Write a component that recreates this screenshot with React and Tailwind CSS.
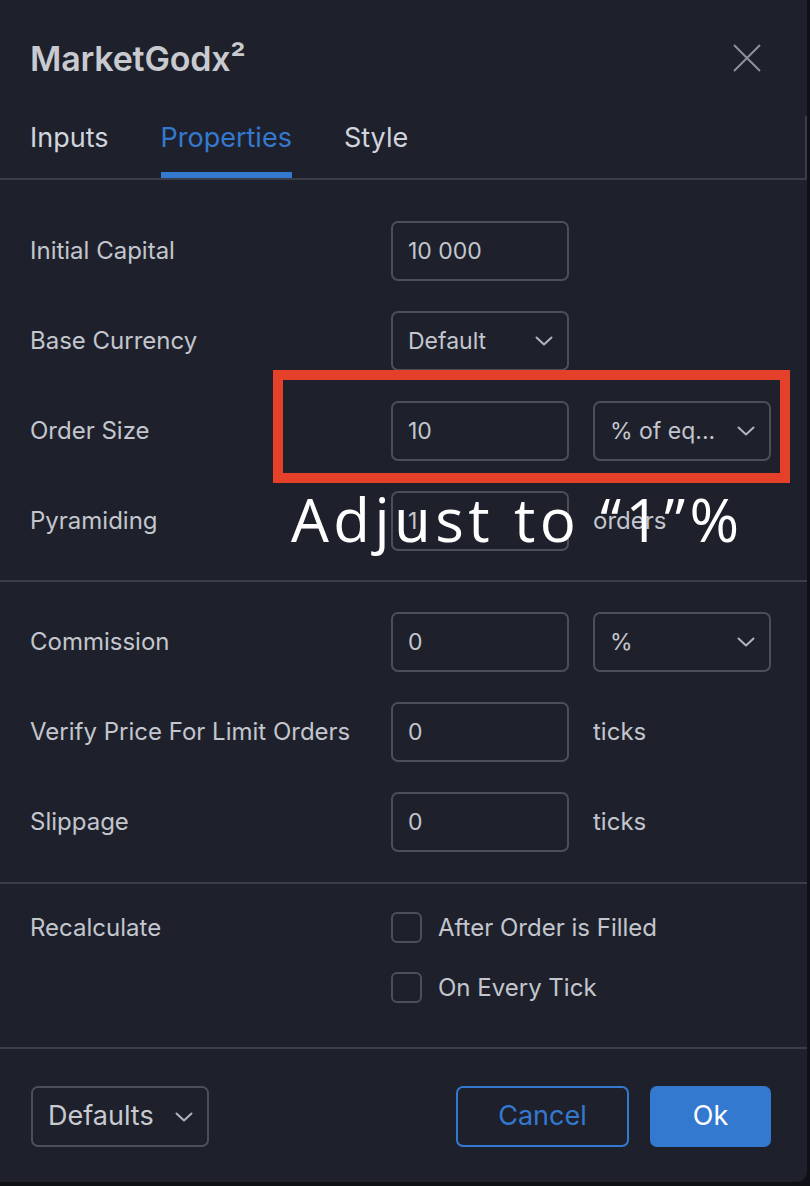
import React from "react";

const Chevron = ({ className = "" }) => (
  <svg className={className} width="18" height="10" viewBox="0 0 18 10" fill="none">
    <path d="M1.5 1.5 L9 8.5 L16.5 1.5" stroke="#b2b5be" strokeWidth="2" strokeLinecap="round" strokeLinejoin="round" />
  </svg>
);

const Label = ({ children }) => (
  <div className="w-[361px] shrink-0 text-[24px] text-[#c3c6cd]">{children}</div>
);

const Input = ({ value }) => (
  <div className="w-[178px] h-[60px] shrink-0 rounded-[7px] border-2 border-[#4c4f5a] flex items-center pl-[15px] text-[23px] text-[#c3c6cd]">
    {value}
  </div>
);

const Select = ({ value }) => (
  <div className="w-[178px] h-[60px] shrink-0 rounded-[7px] border-2 border-[#4c4f5a] flex items-center justify-between pl-[15px] pr-[14px] text-[23px] text-[#c3c6cd]">
    <span>{value}</span>
    <Chevron />
  </div>
);

const Row = ({ label, children }) => (
  <div className="flex items-center h-[60px]">
    <Label>{label}</Label>
    <div className="flex items-center gap-[24px]">{children}</div>
  </div>
);

const Suffix = ({ children }) => (
  <span className="text-[24px] text-[#c3c6cd]">{children}</span>
);

const Checkbox = ({ label }) => (
  <div className="flex items-center gap-[16px] h-[31px]">
    <div className="w-[31px] h-[31px] rounded-[6px] border-2 border-[#4c4f5a]" />
    <span className="text-[24px] leading-[31px] text-[#c3c6cd]">{label}</span>
  </div>
);

const Sep = () => <div className="h-[2px] w-full bg-[#3a3d47]" />;

export default function App() {
  return (
    <div className="w-[810px] h-[1186px] bg-[#0e1016] overflow-hidden" style={{ fontFamily: "Inter, 'Noto Sans', sans-serif" }}>
      <div className="relative w-[807px] h-[1182px] bg-[#1e212c] rounded-br-[10px] flex flex-col">
        {/* Header */}
        <div className="h-[116px] shrink-0 flex items-center justify-between pl-[30px] pr-[45px]">
          <div className="text-[34px] font-semibold text-[#c8cad0] tracking-[-0.2px]">
            MarketGodx²
          </div>
          <svg width="30" height="30" viewBox="0 0 30 30" fill="none">
            <path d="M2 2 L28 28 M28 2 L2 28" stroke="#8e9199" strokeWidth="2" />
          </svg>
        </div>
        {/* Tabs */}
        <div className="flex items-end pl-[30px] gap-[52px] h-[62px] shrink-0 border-r-2 border-[#3a3d47]">
          <div className="flex flex-col">
            <span className="text-[27px] text-[#d1d4dc] leading-[32px] pb-[24px]">Inputs</span>
          </div>
          <div className="flex flex-col">
            <span className="text-[27px] text-[#3479d0] leading-[32px] pb-[18px]">Properties</span>
            <div className="h-[6px] bg-[#3479d0]" />
          </div>
          <div className="flex flex-col">
            <span className="text-[27px] text-[#d1d4dc] leading-[32px] pb-[24px]">Style</span>
          </div>
        </div>
        <Sep />
        {/* Section 1 */}
        <div className="flex flex-col gap-[30px] pl-[30px] pt-[41px] pb-[29px]">
          <Row label="Initial Capital"><Input value="10 000" /></Row>
          <Row label="Base Currency"><Select value="Default" /></Row>
          <Row label="Order Size">
            <Input value="10" />
            <Select value="% of eq..." />
          </Row>
          <Row label="Pyramiding">
            <Input value="1" />
            <Suffix>orders</Suffix>
          </Row>
        </div>
        <Sep />
        {/* Section 2 */}
        <div className="flex flex-col gap-[30px] pl-[30px] pt-[30px] pb-[30px]">
          <Row label="Commission">
            <Input value="0" />
            <Select value="%" />
          </Row>
          <Row label="Verify Price For Limit Orders">
            <Input value="0" />
            <Suffix>ticks</Suffix>
          </Row>
          <Row label="Slippage">
            <Input value="0" />
            <Suffix>ticks</Suffix>
          </Row>
        </div>
        <Sep />
        {/* Section 3 */}
        <div className="flex pl-[30px] pt-[28px] pb-[44px]">
          <div className="w-[361px] shrink-0 text-[24px] text-[#c3c6cd] leading-[31px]">Recalculate</div>
          <div className="flex flex-col gap-[29px]">
            <Checkbox label="After Order is Filled" />
            <Checkbox label="On Every Tick" />
          </div>
        </div>
        <Sep />
        {/* Footer */}
        <div className="flex items-center justify-between pl-[31px] pr-[36px] pt-[37px]">
          <div className="w-[178px] h-[61px] rounded-[7px] border-2 border-[#4c4f5a] flex items-center justify-between pl-[15px] pr-[14px] text-[27px] text-[#c8cad0]">
            <span>Defaults</span>
            <Chevron />
          </div>
          <div className="flex gap-[21px]">
            <div className="w-[173px] h-[61px] rounded-[7px] border-2 border-[#3479d0] flex items-center justify-center text-[27px] text-[#3479d0]">
              Cancel
            </div>
            <div className="w-[121px] h-[61px] rounded-[7px] bg-[#3479d0] flex items-center justify-center text-[27px] text-white">
              Ok
            </div>
          </div>
        </div>

        {/* Annotation overlay */}
        <div className="absolute left-[273px] top-[370px] w-[517px] h-[113px] border-[10px] border-[#e5402a]" />
        <div
          className="absolute left-[291px] top-[474px] text-[60px] leading-[90px] text-white tracking-[4.4px] whitespace-nowrap"
          style={{ fontFamily: "'Open Sans', sans-serif" }}
        >
          Adjust to “1”%
        </div>
      </div>
    </div>
  );
}
